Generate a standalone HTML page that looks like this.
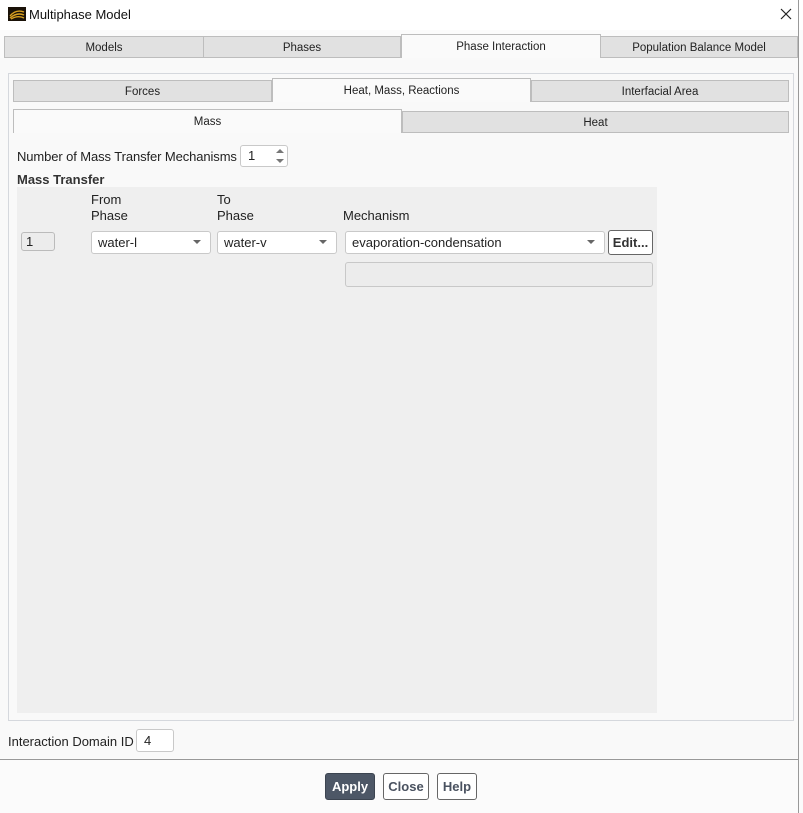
<!DOCTYPE html><html><head><style>
body{margin:0;width:803px;height:813px;background:#fbfbfb;font-family:"Liberation Sans",sans-serif;font-size:13px;color:#222;position:relative;overflow:hidden}
.a{position:absolute;box-sizing:border-box}
.tab{background:#e1e1e1;border:1px solid #bdbdbd;text-align:center;font-size:11.5px;color:#222}
.act{background:#fafafa;border-bottom:none}
.dd{background:#fff;border:1px solid #c9c9c9;border-radius:3px;padding-left:6px;line-height:21px}
.dd:after{content:"";position:absolute;right:9px;top:8px;border-left:4px solid transparent;border-right:4px solid transparent;border-top:4px solid #666}
.btn{border:1px solid #666;border-radius:3px;background:#fff;font-weight:bold;text-align:center;color:#4a5260;line-height:26px}
</style></head><body>
<div class="a" style="left:0;top:0;width:803px;height:30px;background:#fff"></div>
<svg class="a" style="left:8px;top:7px" width="18" height="14"><rect width="18" height="14" fill="#1a1208"/><path d="M2 9 Q8 2 16 5 M2 11 Q9 5 16 8 M3 12 Q10 8 16 11" stroke="#d9a020" stroke-width="1.4" fill="none"/></svg>
<div class="a" style="left:29px;top:7px;font-size:13px;color:#111">Multiphase Model</div>
<svg class="a" style="left:780px;top:8px" width="12" height="12"><path d="M1 1L11 11M11 1L1 11" stroke="#222" stroke-width="1.2"/></svg>
<div class="a tab" style="left:4px;top:36px;width:200px;height:22px;line-height:22px">Models</div>
<div class="a tab" style="left:203px;top:36px;width:198px;height:22px;line-height:22px">Phases</div>
<div class="a tab act" style="left:401px;top:34px;width:200px;height:24px;line-height:25px">Phase Interaction</div>
<div class="a tab" style="left:600px;top:36px;width:198px;height:22px;line-height:22px">Population Balance Model</div>
<div class="a" style="left:0;top:58px;width:798px;height:700px;background:#f9f9f9"></div>
<div class="a" style="left:8px;top:73px;width:786px;height:648px;border:1px solid #d5d8dd"></div>
<div class="a tab" style="left:13px;top:80px;width:259px;height:22px;line-height:22px">Forces</div>
<div class="a tab act" style="left:272px;top:78px;width:259px;height:24px;line-height:25px">Heat, Mass, Reactions</div>
<div class="a tab" style="left:531px;top:80px;width:258px;height:22px;line-height:22px">Interfacial Area</div>
<div class="a tab act" style="left:13px;top:109px;width:389px;height:24px;line-height:25px;border-bottom:none">Mass</div>
<div class="a tab" style="left:402px;top:111px;width:387px;height:22px;line-height:22px">Heat</div>
<div class="a" style="left:17px;top:149px;letter-spacing:-0.1px">Number of Mass Transfer Mechanisms</div>
<div class="a" style="left:240px;top:145px;width:48px;height:22px;background:#fff;border:1px solid #c9c9c9;border-radius:3px;padding-left:7px;line-height:20px">1</div>
<svg class="a" style="left:274px;top:147px" width="12" height="18"><path d="M2 6 L6 2 L10 6Z M2 12 L6 16 L10 12Z" fill="#777"/></svg>
<div class="a" style="left:17px;top:172px;font-weight:bold;color:#333">Mass Transfer</div>
<div class="a" style="left:17px;top:187px;width:640px;height:526px;background:#efefef"></div>
<div class="a" style="left:91px;top:192px;line-height:16px">From<br>Phase</div>
<div class="a" style="left:217px;top:192px;line-height:16px">To<br>Phase</div>
<div class="a" style="left:343px;top:208px">Mechanism</div>
<div class="a" style="left:21px;top:232px;width:34px;height:19px;border:1px solid #bbb;border-radius:3px;background:#ececec;padding-left:4px;line-height:17px">1</div>
<div class="a dd" style="left:91px;top:231px;width:120px;height:23px">water-l</div>
<div class="a dd" style="left:217px;top:231px;width:120px;height:23px">water-v</div>
<div class="a dd" style="left:345px;top:231px;width:260px;height:23px">evaporation-condensation</div>
<div class="a btn" style="left:608px;top:230px;width:45px;height:25px;line-height:24px;color:#333">Edit...</div>
<div class="a" style="left:345px;top:262px;width:308px;height:25px;background:#ececec;border:1px solid #c8c8c8;border-radius:3px"></div>
<div class="a" style="left:8px;top:734px">Interaction Domain ID</div>
<div class="a" style="left:136px;top:729px;width:38px;height:23px;background:#fff;border:1px solid #c9c9c9;border-radius:3px;padding-left:7px;line-height:21px">4</div>
<div class="a" style="left:0;top:759px;width:798px;height:1px;background:#999"></div>
<div class="a" style="left:798px;top:0;width:1px;height:813px;background:#999"></div>
<div class="a btn" style="left:325px;top:773px;width:50px;height:27px;background:#4d5766;border-color:#3c4450;color:#fff">Apply</div>
<div class="a btn" style="left:383px;top:773px;width:46px;height:27px">Close</div>
<div class="a btn" style="left:437px;top:773px;width:40px;height:27px">Help</div>
</body></html>
